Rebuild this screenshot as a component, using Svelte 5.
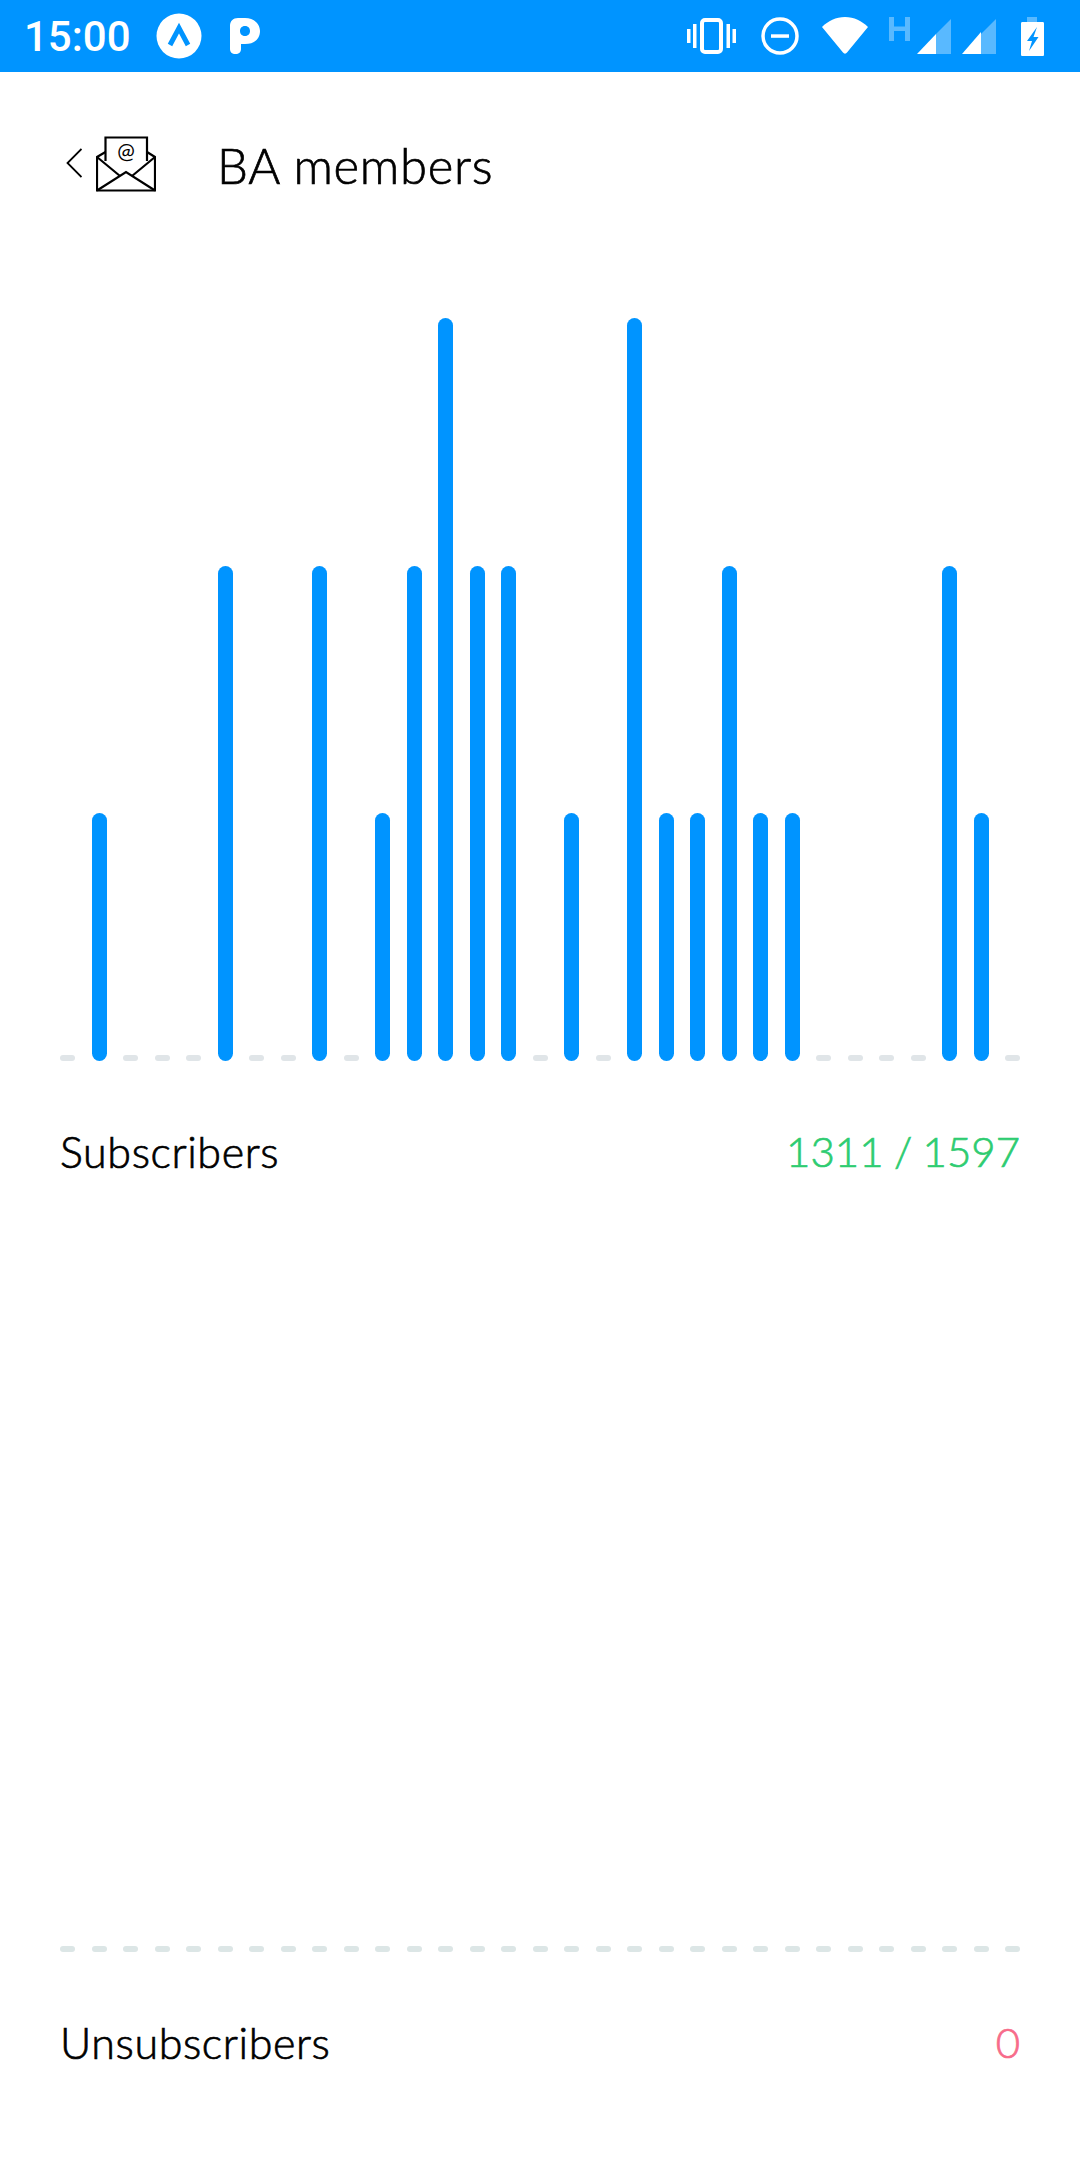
<script lang="ts">
  // bar height per slot, in units of the chart's max (3); 0 draws only the dash
  const subscribers = [1, 0, 0, 0, 2, 0, 0, 2, 0, 1, 2, 3, 2, 2, 0, 1, 0, 3, 1, 1, 2, 1, 1, 0, 0, 0, 0, 2, 1];
  const slots = [0, ...subscribers, 0];
  const empty = new Array(31).fill(0);

  const sections = [
    { label: 'Subscribers', value: '1311 / 1597', tone: 'good', slots, line: 'line-a' },
    { label: 'Unsubscribers', value: '0', tone: 'bad', slots: empty, line: 'line-b' },
  ];
</script>

<div class="page">
  <div class="status">
    <span class="time">15:00</span>
    <svg class="ic-a" width="46" height="46" viewBox="0 0 46 46">
      <circle cx="23" cy="23" r="22.5" fill="#fff" />
      <path d="M14 32 L23 15 L32 32" fill="none" stroke="#0094ff" stroke-width="5" />
    </svg>
    <svg class="ic-p" width="30" height="36" viewBox="0 0 30 36">
      <path fill="#fff" fill-rule="evenodd" d="M0 8 C0 3 3 0 8 0 H15 C24 0 30 6 30 13 C30 21 24 26 15 26 H11 V31 C11 34 9 36 5.500 36 C2 36 0 34 0 31 Z M15 8 C11.500 8 10 10.500 10 13 C10 15.500 11.500 18 15 18 C18.500 18 20 15.500 20 13 C20 10.500 18.500 8 15 8 Z" />
    </svg>
    <span class="spring"></span>
    <svg class="ic-vib" width="49" height="36" viewBox="0 0 49 36">
      <rect x="15" y="2" width="19" height="32" rx="3" fill="none" stroke="#fff" stroke-width="4" />
      <rect x="0" y="11" width="3.500" height="14" fill="#fff" />
      <rect x="6" y="6" width="3.500" height="24" fill="#fff" />
      <rect x="39.500" y="6" width="3.500" height="24" fill="#fff" />
      <rect x="45.500" y="11" width="3.500" height="14" fill="#fff" />
    </svg>
    <svg class="ic-dnd" width="38" height="38" viewBox="0 0 38 38">
      <circle cx="19" cy="19" r="17" fill="none" stroke="#fff" stroke-width="3.500" />
      <rect x="10" y="17.300" width="18" height="3.500" fill="#fff" />
    </svg>
    <svg class="ic-wifi" width="46" height="37" viewBox="0 0 46 37">
      <path fill="#fff" d="M0 10 C6 4 14 0 23 0 C32 0 40 4 46 10 L25 35.500 C24 37 22 37 21 35.500 Z" />
    </svg>
    <svg class="ic-h" width="21" height="24" viewBox="0 0 21 24">
      <path fill="#fff" fill-opacity="0.35" d="M0 0 H5 V9.500 H16 V0 H21 V24 H16 V14 H5 V24 H0 Z" />
    </svg>
    <svg class="ic-sig" width="34" height="35" viewBox="0 0 34 35">
      <path fill="#fff" fill-opacity="0.35" d="M34 0 V35 H19 V15 Z" />
      <path fill="#fff" d="M19 15 V35 H0 Z" />
    </svg>
    <svg class="ic-sig" width="34" height="35" viewBox="0 0 34 35">
      <path fill="#fff" fill-opacity="0.35" d="M34 0 V35 H19 V15 Z" />
      <path fill="#fff" d="M19 13 V35 H0 Z" />
    </svg>
    <svg class="ic-bat" width="23" height="39" viewBox="0 0 23 39">
      <path fill="#fff" fill-opacity="0.35" d="M6 0 H16 V5 H6 Z" />
      <path fill="#fff" d="M1.500 5 H21.500 C22.500 5 23 5.500 23 6.500 V37.500 C23 38.500 22.500 39 21.500 39 H1.500 C0.500 39 0 38.500 0 37.500 V6.500 C0 5.500 0.500 5 1.500 5 Z" />
      <path fill="#0094ff" d="M16 10 L6 24 H11 L8 34 L17.500 20 H12.500 Z" />
    </svg>
  </div>

  <header>
    <svg class="back" width="16" height="30" viewBox="0 0 16 30">
      <path d="M15.500 1 L1.500 15 L15.500 29" fill="none" stroke="#000" stroke-width="1.800" />
    </svg>
    <svg class="mail" width="60" height="56" viewBox="0 0 60 56" fill="none" stroke="#000" stroke-width="2.200">
      <path d="M9.500 25 V1.500 H51 V25" />
      <path d="M9.500 16 L1 21 V54.500 H59 V21 L51 16" />
      <path d="M1 54.500 L30 36 L59 54.500" />
      <path d="M1 21 L24 40 M59 21 L36 40" />
      <text x="30" y="23" text-anchor="middle" class="at">@</text>
    </svg>
    <h1>BA members</h1>
  </header>

  {#each sections as section}
    <section>
      <div class="chart">
        {#each section.slots as h}
          <div class="slot">
            {#if h > 0}
              <div class="bar" style="height: {(h * 743) / 3}px"></div>
            {:else}
              <div class="dash {section.line}"></div>
            {/if}
          </div>
        {/each}
      </div>
      <div class="row">
        <span class="label">{section.label}</span>
        <span class="value {section.tone}">{section.value}</span>
      </div>
    </section>
  {/each}
</div>

<style>
  :global(body) {
    margin: 0;
    background: #fff;
  }
  .page {
    width: 1080px;
    height: 2160px;
    background: #fff;
    font-family: Lato, "Open Sans", sans-serif;
    color: #000;
    overflow: hidden;
  }
  .status {
    height: 72px;
    background: #0094ff;
    display: flex;
    align-items: center;
    padding: 0 27px 0 24px;
    box-sizing: border-box;
  }
  .time {
    font-family: Roboto, sans-serif;
    font-size: 42px;
    font-weight: 500;
    color: #fff;
    width: 132px;
  }
  .ic-a {
    margin-right: 28px;
  }
  .spring {
    flex: 1;
  }
  .ic-vib {
    margin-right: 25px;
  }
  .ic-dnd {
    margin-right: 23px;
  }
  .ic-wifi {
    margin-right: 21px;
    margin-top: -2px;
  }
  .ic-h {
    margin-right: 7px;
    margin-top: -14px;
  }
  .ic-sig {
    margin-right: 11px;
    margin-top: 1px;
  }
  .ic-sig + .ic-sig {
    margin-right: 25px;
  }
  .ic-bat {
    margin-right: 9px;
  }
  header {
    height: 186px;
    display: flex;
    align-items: center;
    padding-left: 66px;
    margin-bottom: 60px;
  }
  .back {
    margin-right: 14px;
    margin-top: -4px;
  }
  .mail {
    margin-top: -2px;
    margin-right: 61px;
  }
  .at {
    font-family: Lato, sans-serif;
    font-size: 21px;
    font-weight: 400;
    fill: #000;
    stroke: none;
  }
  h1 {
    margin: 0;
    font-size: 49px;
    font-weight: 300;
    letter-spacing: 0.7px;
    -webkit-text-stroke: 0.7px #000;
  }
  .chart {
    height: 743px;
    margin: 0 60px;
    display: flex;
    justify-content: space-between;
    align-items: flex-end;
  }
  .slot {
    width: 15px;
  }
  .bar {
    background: #0094ff;
    border-radius: 8px;
  }
  .dash {
    height: 6px;
    border-radius: 3px;
  }
  .line-a {
    background: #e0e5e8;
  }
  .line-b {
    background: #dce6e6;
  }
  .row {
    height: 58px;
    margin: 61px 60px 29px;
    display: flex;
    justify-content: space-between;
    align-items: center;
    font-size: 43px;
    font-weight: 300;
  }
  .label {
    letter-spacing: 0.6px;
    -webkit-text-stroke: 0.7px #000;
  }
  .value {
    font-size: 42px;
    word-spacing: -1px;
    -webkit-text-stroke: 0.7px currentColor;
  }
  .good {
    color: #2ecc71;
  }
  .bad {
    color: #f76c8a;
  }
</style>
